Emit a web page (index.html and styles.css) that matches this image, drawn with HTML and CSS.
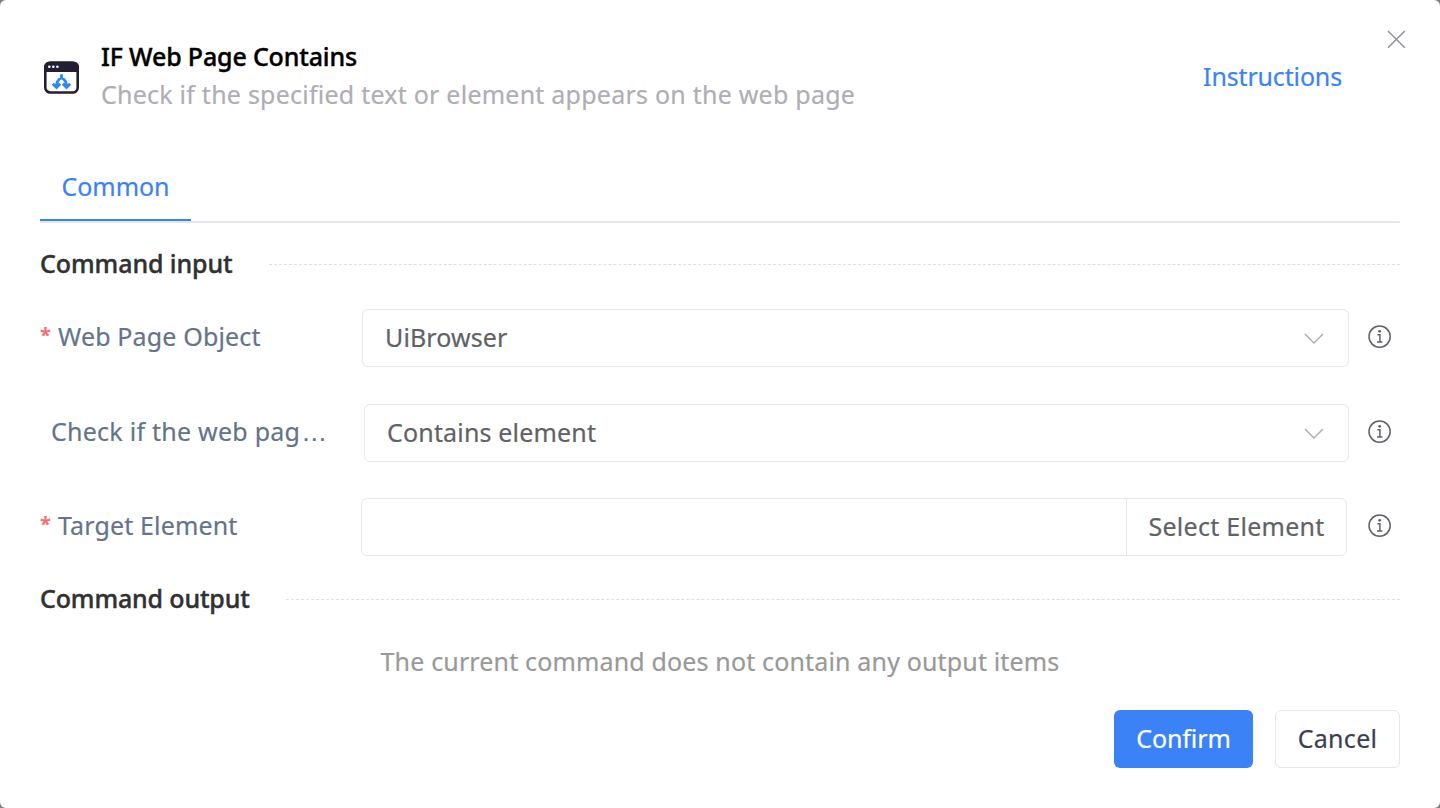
FILE: index.html
```html
<!DOCTYPE html>
<html lang="en">
<head>
<meta charset="utf-8">
<title>IF Web Page Contains</title>
<link rel="stylesheet" href="styles.css">
</head>
<body>
<svg class="sprite" aria-hidden="true">
  <symbol id="info" viewBox="0 0 24 24"><g fill="none" stroke="#606266" stroke-width="1.5"><circle cx="11.600" cy="11.600" r="10.600"/><path d="M9.400 9.700h2.500v7M9 16.900h5.400"/></g><circle cx="11.700" cy="6.300" r="1.400" fill="#606266"/></symbol>
  <symbol id="chevron" viewBox="0 0 20 12"><path d="M1 1l9 9 9-9" fill="none" stroke="#a8abb2" stroke-width="1.4"/></symbol>
</svg>
<main class="dialog">
  <button class="close" aria-label="Close"><svg width="19" height="19" viewBox="0 0 19 19"><path d="M1 1l16.800 16.800M17.800 1L1 17.800" stroke="#909399" stroke-width="1.5"/></svg></button>
  <header class="header">
    <svg class="logo" width="37" height="34" viewBox="0 0 37 34">
      <rect x="2.300" y="1.500" width="32.400" height="30" rx="5" fill="#fff" stroke="#231f33" stroke-width="2.600"/>
      <path d="M1 11V6a5 5 0 0 1 5-5h25a5 5 0 0 1 5 5v5z" fill="#231f33"/>
      <g fill="#fff"><circle cx="6.300" cy="5.800" r="1.300"/><circle cx="10.300" cy="5.800" r="1.300"/><circle cx="14.400" cy="5.800" r="1.300"/></g>
      <path d="M18.500 13.300v4M18.500 16.800c-3.500 1.700-5 3.700-5 9.200M18.500 16.800c3.500 1.700 5 3.700 5 9.200M9.800 22.700l3.700 3.700 3.700-3.700M19.800 22.700l3.700 3.700 3.700-3.700" fill="none" stroke="#2b85fb" stroke-width="2.800"/>
    </svg>
    <div class="heading">
      <h1 class="title">IF Web Page Contains</h1>
      <p class="subtitle">Check if the specified text or element appears on the web page</p>
    </div>
    <a class="instructions">Instructions</a>
  </header>
  <nav class="tabs"><a class="tab"><span class="tab-text">Common</span></a></nav>
  <h2 class="section"><span class="section-in">Command input</span></h2>
  <div class="row">
    <label class="label"><span class="star">*</span><span class="l-object">Web Page Object</span></label>
    <div class="select"><span class="v-browser">UiBrowser</span><svg class="chevron"><use href="#chevron"/></svg></div>
    <svg class="info"><use href="#info"/></svg>
  </div>
  <div class="row row-check">
    <label class="label optional"><span class="l-check">Check if the web pag<span class="ellipsis">…</span></span></label>
    <div class="select"><span class="v-contains">Contains element</span><svg class="chevron"><use href="#chevron"/></svg></div>
    <svg class="info"><use href="#info"/></svg>
  </div>
  <div class="row row-target">
    <label class="label"><span class="star">*</span><span class="l-target">Target Element</span></label>
    <div class="group"><div class="field"></div><button class="pick"><span class="pick-text">Select Element</span></button></div>
    <svg class="info"><use href="#info"/></svg>
  </div>
  <h2 class="section section-output"><span class="section-out">Command output</span></h2>
  <p class="empty"><span class="empty-text">The current command does not contain any output items</span></p>
  <footer class="footer">
    <button class="btn confirm"><span class="confirm-text">Confirm</span></button>
    <button class="btn cancel"><span class="cancel-text">Cancel</span></button>
  </footer>
</main>
</body>
</html>
```
FILE: styles.css
```css
* { box-sizing: border-box; }
html, body { height: 100%; }
body { margin: 0; background: #7f7f7f; font: 25px/36px "Noto Sans", sans-serif; overflow: hidden; -webkit-text-stroke: .2px currentColor; }
h1, h2, p { margin: 0; font-size: inherit; font-weight: 400; white-space: nowrap; }
button { font: inherit; padding: 0; margin: 0; background: none; border: 0; white-space: nowrap; }
.sprite { display: none; }
.dialog { position: relative; height: 808px; background: #fff; border-radius: 6px; padding: 39px 40px 0; display: flex; flex-direction: column; }
.close { position: absolute; left: 1387px; top: 30px; width: 19px; height: 19px; }
.close svg { display: block; }
.header { display: flex; height: 76px; padding: 0 58px 0 3px; align-items: center; }
.logo { flex: none; margin: 2px 21px 0 0; }
.heading { display: flex; flex-direction: column; gap: 2px; flex: 1; padding-bottom: 4px; }
.title { color: #000; font-weight: 500; letter-spacing: -.16px; -webkit-text-stroke: .4px #000; }
.subtitle { color: #afadb5; letter-spacing: .235px; }
.instructions { color: #3b82f6; letter-spacing: -.15px; padding-bottom: 2px; }
.tabs { display: flex; height: 108px; align-items: flex-end; border-bottom: 2px solid #e4e7ed; }
.tab { width: 151px; height: 52px; border-bottom: 2px solid #3b82f6; color: #3b82f6; padding-left: 21.5px; letter-spacing: -.05px; line-height: 34px; }
.section { display: flex; height: 36px; margin-top: 23px; align-items: center; color: #303133; font-weight: 500; -webkit-text-stroke: .4px #303133; }
.section span { padding-bottom: 2px; }
.section-in { letter-spacing: -.08px; }
.section-out { letter-spacing: -.15px; }
.section::after { content: ""; flex: 1; border-top: 1px dashed #dcdfe6; margin-left: 36px; }
.row { display: flex; height: 58px; margin-top: 27px; }
.row-check { margin-top: 37px; }
.row-target { margin-top: 36px; }
.label { width: 322px; flex: none; display: flex; align-items: center; color: #64748b; white-space: nowrap; padding-bottom: 4px; }
.optional { width: 324px; padding-left: 11px; }
.star { color: #f56c6c; width: 18px; font-size: 20px; font-weight: 600; line-height: 30px; padding-bottom: 3px; }
.l-object, .l-target { letter-spacing: .15px; }
.l-check { letter-spacing: .25px; }
.ellipsis { font-family: "Liberation Sans", sans-serif; font-size: 26px; margin-left: 1px; line-height: 1; }
.select { flex: 1; display: flex; align-items: center; border: 1px solid #e4e7ed; border-radius: 6px; padding: 0 24px 0 22px; color: #606266; }
.select span { padding-bottom: 2px; }
.v-browser { letter-spacing: .1px; }
.v-contains { letter-spacing: .17px; }
.chevron { width: 20px; height: 12px; margin-left: auto; margin-top: 2px; }
.info { width: 24px; height: 24px; flex: none; margin: 16px 8px 0 19px; }
.row-target .label { width: 321px; }
.group { flex: 1; display: flex; border: 1px solid #e4e7ed; border-radius: 6px; margin-right: 2px; }
.field { flex: 1; }
.pick { width: 220px; border-left: 1px solid #e4e7ed; color: #606266; letter-spacing: .27px; padding-bottom: 2px; }
.section-output { margin-top: 25px; }
.empty { margin-top: 26px; color: #999; text-align: center; letter-spacing: .155px; }
.footer { display: flex; justify-content: flex-end; gap: 22px; margin-top: 31px; }
.btn { height: 58px; border-radius: 6px; padding-bottom: 2px; }
.confirm { width: 139px; background: #3b82f6; color: #fff; letter-spacing: -.1px; }
.cancel { width: 125px; border: 1px solid #e4e7ed; color: #374151; letter-spacing: .3px; }
```
